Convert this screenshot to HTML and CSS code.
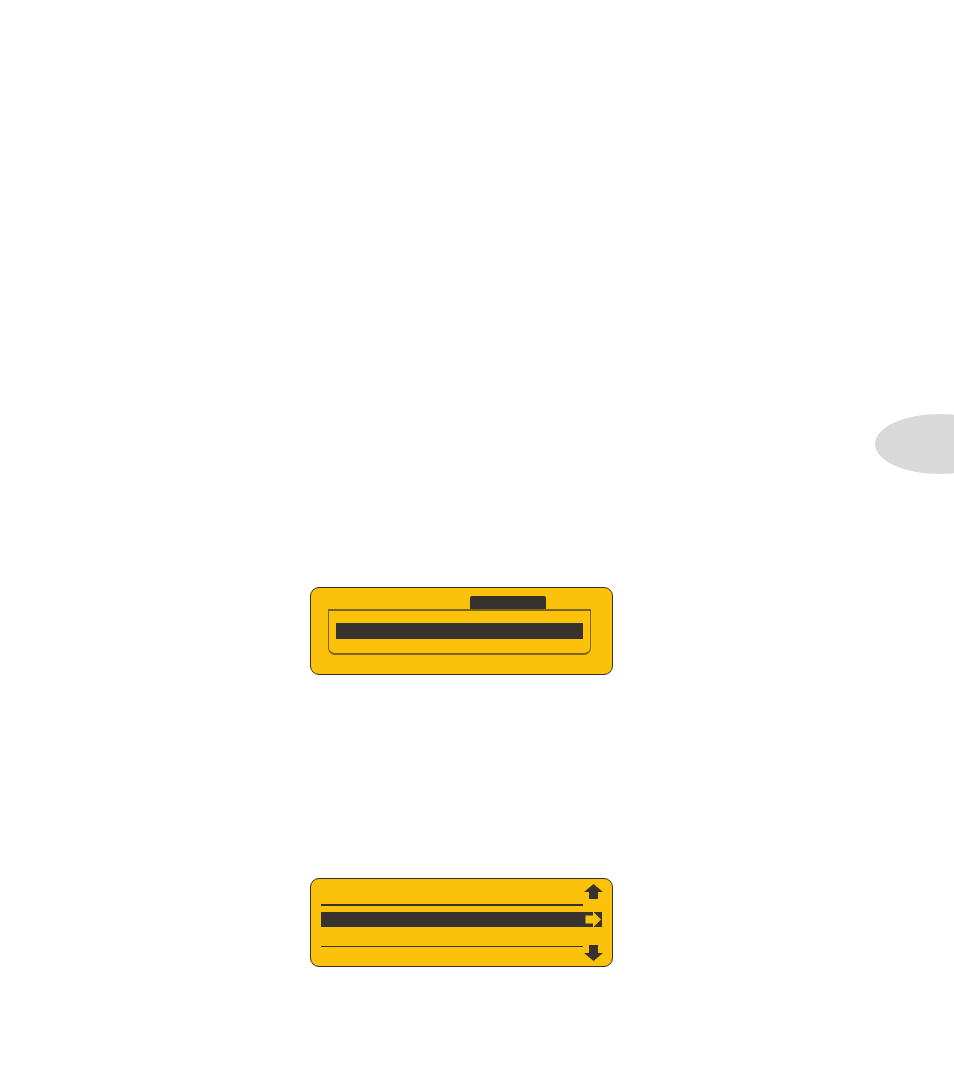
FILE: index.html
```
<!DOCTYPE html>
<html lang="en">
<head>
    <meta charset="UTF-8">
    <meta name="viewport" content="width=device-width, initial-scale=1.0">
    <title>Display screens</title>
    <link rel="stylesheet" href="styles.css">
</head>
<body>
    <!-- grey page marker, cut by the right edge -->
    <svg class="thumb" width="80" height="60" viewBox="0 0 80 60">
        <ellipse cx="65" cy="30" rx="64" ry="30" fill="#d9d9d9"/>
    </svg>

    <main>
        <div class="screen tabbed">
            <div class="tab"></div>
            <div class="frame">
                <div class="selected"></div>
            </div>
        </div>

        <div class="screen menu">
            <div class="row top">
                <div class="line"></div>
                <svg class="arrow" width="20" height="16" viewBox="0 0 20 16">
                    <path d="M10.5 0L20 8H15V15H6V8H1Z" fill="#38322f"/>
                </svg>
            </div>
            <div class="row current">
                <svg width="17" height="15" viewBox="0 0 17 15">
                    <path d="M0.5 3.5H8.5V0L16 7.5L8.5 15V11.5H0.5Z" fill="#fcc10a"/>
                    <path d="M8 0H9V15H8Z" fill="#fcc10a"/>
                </svg>
            </div>
            <div class="row bottom">
                <div class="line"></div>
                <svg class="arrow" width="20" height="16" viewBox="0 0 20 16">
                    <path d="M6 0H15V8H20L10.5 16L1 8H6Z" fill="#38322f"/>
                </svg>
            </div>
        </div>
    </main>
</body>
</html>
```
FILE: styles.css
```
body {
    margin: 0;
    min-height: 100vh;
    box-sizing: border-box;
    padding-top: 414px;
    background-color: #fff;
    font-family: "Liberation Sans", Arial, sans-serif;
}

.thumb {
    display: block;
    margin-left: auto;
}

main {
    display: flex;
    flex-direction: column;
    gap: 203px;
    margin: 113px 0 0 310px;
}

.screen {
    box-sizing: border-box;
    width: 303px;
    border: 1px solid #38322f;
    border-radius: 9px;
    background-color: #fcc10a;
}

.tabbed {
    padding: 8px 21px 19px 17px;
}
.tab {
    width: 76px;
    height: 13px;
    margin-left: 142px;
    border-radius: 2px 2px 0 0;
    background-color: #38322f;
}
.frame {
    padding: 12px 7px 14px;
    border: solid #7c6419;
    border-width: 2px 1px;
    border-radius: 0 0 7px 7px;
}
.selected {
    height: 16px;
    background-color: #38322f;
}

.menu {
    padding: 5px 8px 5px 10px;
}
.row {
    display: flex;
}
.line {
    width: 262px;
    border-bottom: 1px solid #38322f;
}
.arrow {
    flex-shrink: 0;
}
.top .line {
    height: 20px;
    border-bottom-width: 2px;
}
.current {
    justify-content: flex-end;
    width: 281px;
    height: 15px;
    margin-top: 6px;
    background-color: #38322f;
}
.bottom {
    align-items: flex-end;
}
.bottom .line {
    height: 19px;
    margin-bottom: 14px;
}
```
